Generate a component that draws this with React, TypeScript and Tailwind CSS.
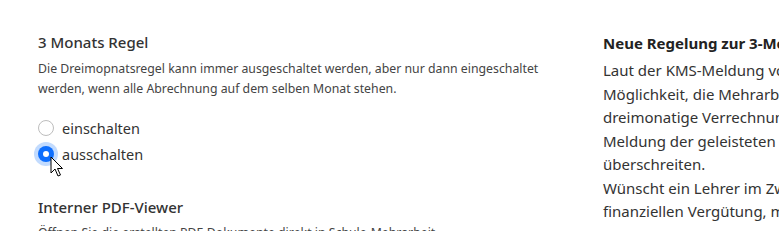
import React, { useState } from "react";

const Cursor = () => (
  <svg width="14" height="22" viewBox="0 0 14 22" className="absolute left-[12px] top-[10px] pointer-events-none">
    <path d="M1 1 L1 17 L5 13 L8 20 L10.5 19 L7.5 12.5 L12.5 12.5 Z" fill="#fff" stroke="#000" strokeWidth="1" strokeLinejoin="round" />
  </svg>
);

export default function App() {
  const [rule, setRule] = useState<"on" | "off">("off");

  return (
    <div className="flex w-[779px] h-[231px] overflow-hidden bg-white text-[#333] font-['Noto_Sans',sans-serif]">
      {/* Left column */}
      <div className="w-[565px] shrink-0 pl-[38px] pt-[31px]">
        <h3 className="text-[15px] font-medium leading-[22px] text-[#333]">3 Monats Regel</h3>
        <p className="mt-[6px] text-[12.3px] leading-[20px] text-[#444]">
          Die Dreimopnatsregel kann immer ausgeschaltet werden, aber nur dann eingeschaltet werden, wenn alle Abrechnung auf dem selben Monat stehen.
        </p>

        <div className="mt-[19px] flex flex-col gap-[6px]">
          <label className="flex items-center gap-[8px] cursor-pointer">
            <span className="relative flex h-[16px] w-[16px] items-center justify-center">
              <input
                type="radio"
                name="rule"
                checked={rule === "on"}
                onChange={() => setRule("on")}
                className="sr-only"
              />
              <span className="h-[16px] w-[16px] rounded-full border border-[#bdbdbd] bg-white" />
            </span>
            <span className="text-[14.5px] leading-[20px] text-[#333]">einschalten</span>
          </label>
          <label className="flex items-center gap-[8px] cursor-pointer">
            <span className="relative flex h-[16px] w-[16px] items-center justify-center">
              <input
                type="radio"
                name="rule"
                checked={rule === "off"}
                onChange={() => setRule("off")}
                className="sr-only"
              />
              <span className="h-[16px] w-[16px] rounded-full bg-[#0d6efd] ring-[4px] ring-[#0d6efd]/25 flex items-center justify-center">
                <span className="h-[6px] w-[6px] rounded-full bg-white" />
              </span>
              <Cursor />
            </span>
            <span className="text-[14.5px] leading-[20px] text-[#333]">ausschalten</span>
          </label>
        </div>

        <h3 className="mt-[32px] text-[15px] font-medium leading-[22px] text-[#333]">Interner PDF-Viewer</h3>
        <p className="mt-[5px] text-[12.3px] leading-[20px] text-[#444] whitespace-nowrap">
          Öffnen Sie die erstellten PDF-Dokumente direkt in Schule-Mehrarbeit.
        </p>
      </div>

      {/* Right column */}
      <div className="pl-[38px] pt-[32px] whitespace-nowrap">
        <h3 className="text-[15px] font-bold leading-[22px] text-[#222]">Neue Regelung zur 3-Monats-Regel</h3>
        <p className="mt-[5px] text-[15px] leading-[23.5px] text-[#333]">
          Laut der KMS-Meldung vom 15. März 2023 besteht die
          <br />
          Möglichkeit, die Mehrarbeit über einen Zeitraum
          <br />
          dreimonatige Verrechnung vorzunehmen, sofern die
          <br />
          Meldung der geleisteten Stunden den Zeitraum nicht
          <br />
          überschreiten.
          <br />
          Wünscht ein Lehrer im Zweifelsfall eine Auszahlung der
          <br />
          finanziellen Vergütung, muss dies gemeldet werden.
        </p>
      </div>
    </div>
  );
}
